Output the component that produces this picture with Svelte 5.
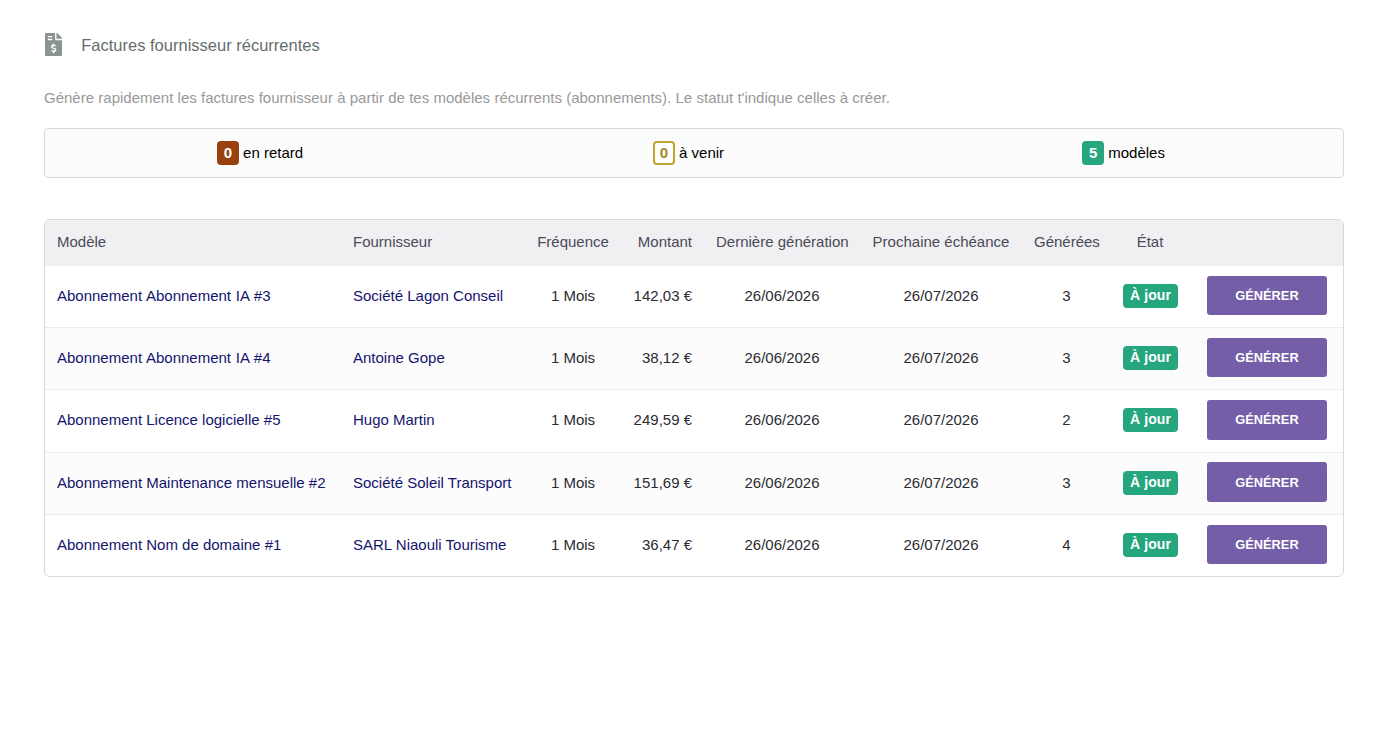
<script>
  const rows = [
    ['Abonnement Abonnement IA #3', 'Société Lagon Conseil', '142,03 €', 3, true],
    ['Abonnement Abonnement IA #4', 'Antoine Gope', '38,12 €', 3, true],
    ['Abonnement Licence logicielle #5', 'Hugo Martin', '249,59 €', 2, false],
    ['Abonnement Maintenance mensuelle #2', 'Société Soleil Transport', '151,69 €', 3, false],
    ['Abonnement Nom de domaine #1', 'SARL Niaouli Tourisme', '36,47 €', 4, false]
  ];
</script>

<main class="page">
  <header class="title">
    <svg class="icon" viewBox="0 0 384 512" aria-hidden="true">
      <path fill="#8b958f" d="M377 105L279.1 7c-4.5-4.5-10.6-7-17-7H256v128h128v-6.100c0-6.300-2.500-12.400-7-16.900zM224 136V0H24C10.700 0 0 10.700 0 24v464c0 13.300 10.700 24 24 24h336c13.300 0 24-10.700 24-24V160H248c-13.200 0-24-10.800-24-24zM64 72c0-4.400 3.600-8 8-8h80c4.400 0 8 3.600 8 8v16c0 4.400-3.600 8-8 8H72c-4.400 0-8-3.600-8-8V72zm0 80v-16c0-4.400 3.600-8 8-8h80c4.400 0 8 3.600 8 8v16c0 4.400-3.600 8-8 8H72c-4.400 0-8-3.600-8-8zm144 263.900V440c0 4.400-3.600 8-8 8h-16c-4.400 0-8-3.600-8-8v-24.300c-11.300-.6-22.300-4.500-31.400-11.400-3.900-2.900-4.100-8.800-.6-12.100l11.800-11.200c2.800-2.600 6.900-2.800 10.100-.8 3.900 2.400 8.300 3.700 12.800 3.700h28.100c6.500 0 11.800-5.900 11.800-13.200 0-6-3.600-11.200-8.800-12.800l-45-13.500c-18.600-5.600-31.600-23.400-31.600-43.400 0-24.500 19.100-44.400 42.700-45.100V240c0-4.400 3.600-8 8-8h16c4.400 0 8 3.600 8 8v24.300c11.300.6 22.300 4.500 31.400 11.400 3.900 2.900 4.100 8.800.6 12.100L229.600 299c-2.800 2.600-6.900 2.800-10.100.8-3.900-2.400-8.300-3.700-12.800-3.700h-28.100c-6.500 0-11.800 5.900-11.800 13.200 0 6 3.600 11.200 8.800 12.800l45 13.500c18.600 5.600 31.600 23.400 31.600 43.400 0 24.500-19.100 44.300-42.700 45z" />
    </svg>
    <h1>Factures fournisseur récurrentes</h1>
  </header>

  <p class="intro">Génère rapidement les factures fournisseur à partir de tes modèles récurrents (abonnements). Le statut t'indique celles à créer.</p>

  <section class="stats">
    <div class="stat"><span class="count late">0</span> en retard</div>
    <div class="stat"><span class="count soon">0</span> à venir</div>
    <div class="stat"><span class="count ok">5</span> modèles</div>
  </section>

  <div class="card">
    <table>
      <colgroup>
        <col class="w1" /><col class="w2" /><col class="w3" /><col class="w4" />
        <col class="w5" /><col class="w6" /><col class="w7" /><col class="w8" /><col />
      </colgroup>
      <thead>
        <tr>
          <th>Modèle</th>
          <th>Fournisseur</th>
          <th class="c">Fréquence</th>
          <th class="r">Montant</th>
          <th class="c last-gen">Dernière génération</th>
          <th class="c">Prochaine échéance</th>
          <th class="c">Générées</th>
          <th class="c">État</th>
          <th></th>
        </tr>
      </thead>
      <tbody>
        {#each rows as row}
          <tr>
            <td class="link" class:spaced={row[4]}>{row[0]}</td>
            <td class="link">{row[1]}</td>
            <td class="c">1 Mois</td>
            <td class="r">{row[2]}</td>
            <td class="c">26/06/2026</td>
            <td class="c">26/07/2026</td>
            <td class="c">{row[3]}</td>
            <td class="c state-cell"><span class="state">À jour</span></td>
            <td class="c action"><button type="button">GÉNÉRER</button></td>
          </tr>
        {/each}
      </tbody>
    </table>
  </div>
</main>

<style>
  :global(body) {
    margin: 0;
    background: #fff;
    font-family: "Liberation Sans", Arial, sans-serif;
    color: #212529;
  }
  .page {
    padding: 32px 38px 0 44px;
  }
  .title {
    display: flex;
    align-items: center;
    gap: 19px;
    height: 26px;
  }
  .icon {
    display: block;
    flex: none;
    width: 17.25px;
    height: 23px;
    margin: -2px 0 0 1px;
  }
  h1 {
    margin: 0;
    font-size: 16.5px;
    font-weight: 400;
    color: #646d6d;
  }
  .intro {
    margin: 29px 0 19px;
    font-size: 15px;
    line-height: 22px;
    word-spacing: 0.1px;
    color: #999;
  }
  .stats {
    height: 48px;
    display: grid;
    grid-template-columns: 430px 427px 1fr;
    align-items: center;
    background: #fcfcfc;
    border: 1px solid #d9d9d9;
    border-radius: 4px;
    font-size: 15px;
    color: #000;
  }
  .stat {
    text-align: center;
  }
  .stat:last-child {
    padding-left: 2px;
  }
  .count {
    display: inline-block;
    box-sizing: border-box;
    min-width: 22px;
    height: 24px;
    line-height: 24px;
    padding: 0 5px;
    border-radius: 4px;
    font-weight: 700;
    color: #fff;
    text-align: center;
  }
  .late { background: #98410f; }
  .ok { background: #26a67f; }
  .soon {
    background: #fff;
    border: 2px solid #bfa52e;
    line-height: 20px;
    padding: 0 4px;
    color: #a08a1c;
  }
  .card {
    margin-top: 41px;
    border: 1px solid #d9d9d9;
    border-radius: 6px;
    overflow: hidden;
  }
  table {
    width: 100%;
    table-layout: fixed;
    border-collapse: collapse;
    font-size: 15px;
  }
  .w1 { width: 296px; }
  .w2 { width: 184px; }
  .w3 { width: 96px; }
  .w4 { width: 83px; }
  .w5 { width: 156px; }
  .w6 { width: 162px; }
  .w7 { width: 89px; }
  .w8 { width: 78px; }
  th {
    height: 45.5px;
    padding: 0 12px 3px;
    box-sizing: border-box;
    background: #f0f0f2;
    font-weight: 400;
    text-align: left;
    color: #4a4a58;
    white-space: nowrap;
  }
  th.last-gen {
    padding-right: 15px;
  }
  td {
    height: 62.2px;
    box-sizing: border-box;
    padding: 0 12px 2px;
    color: #2b2b33;
    white-space: nowrap;
    border-top: 1px solid #ececec;
  }
  tbody tr:first-child td { border-top: 0; }
  tbody tr:nth-child(even) td { background: #fcfcfc; }
  .c { text-align: center; }
  .r { text-align: right; }
  td.link { color: #14146e; }
  td.spaced { word-spacing: 0.55px; }
  td.action { padding-left: 14px; }
  td.state-cell { padding-bottom: 1px; }
  .state {
    display: inline-block;
    padding: 0 7px;
    height: 24px;
    line-height: 22px;
    border-radius: 4px;
    background: #26a67f;
    color: #fff;
    font-size: 14px;
    font-weight: 700;
    letter-spacing: 0.1px;
  }
  button {
    display: inline-block;
    vertical-align: middle;
    width: 120px;
    height: 39.4px;
    border: 0;
    border-radius: 3px;
    background: #745ea8;
    color: #fff;
    font: 700 12.8px "Liberation Sans", Arial, sans-serif;
  }
</style>
